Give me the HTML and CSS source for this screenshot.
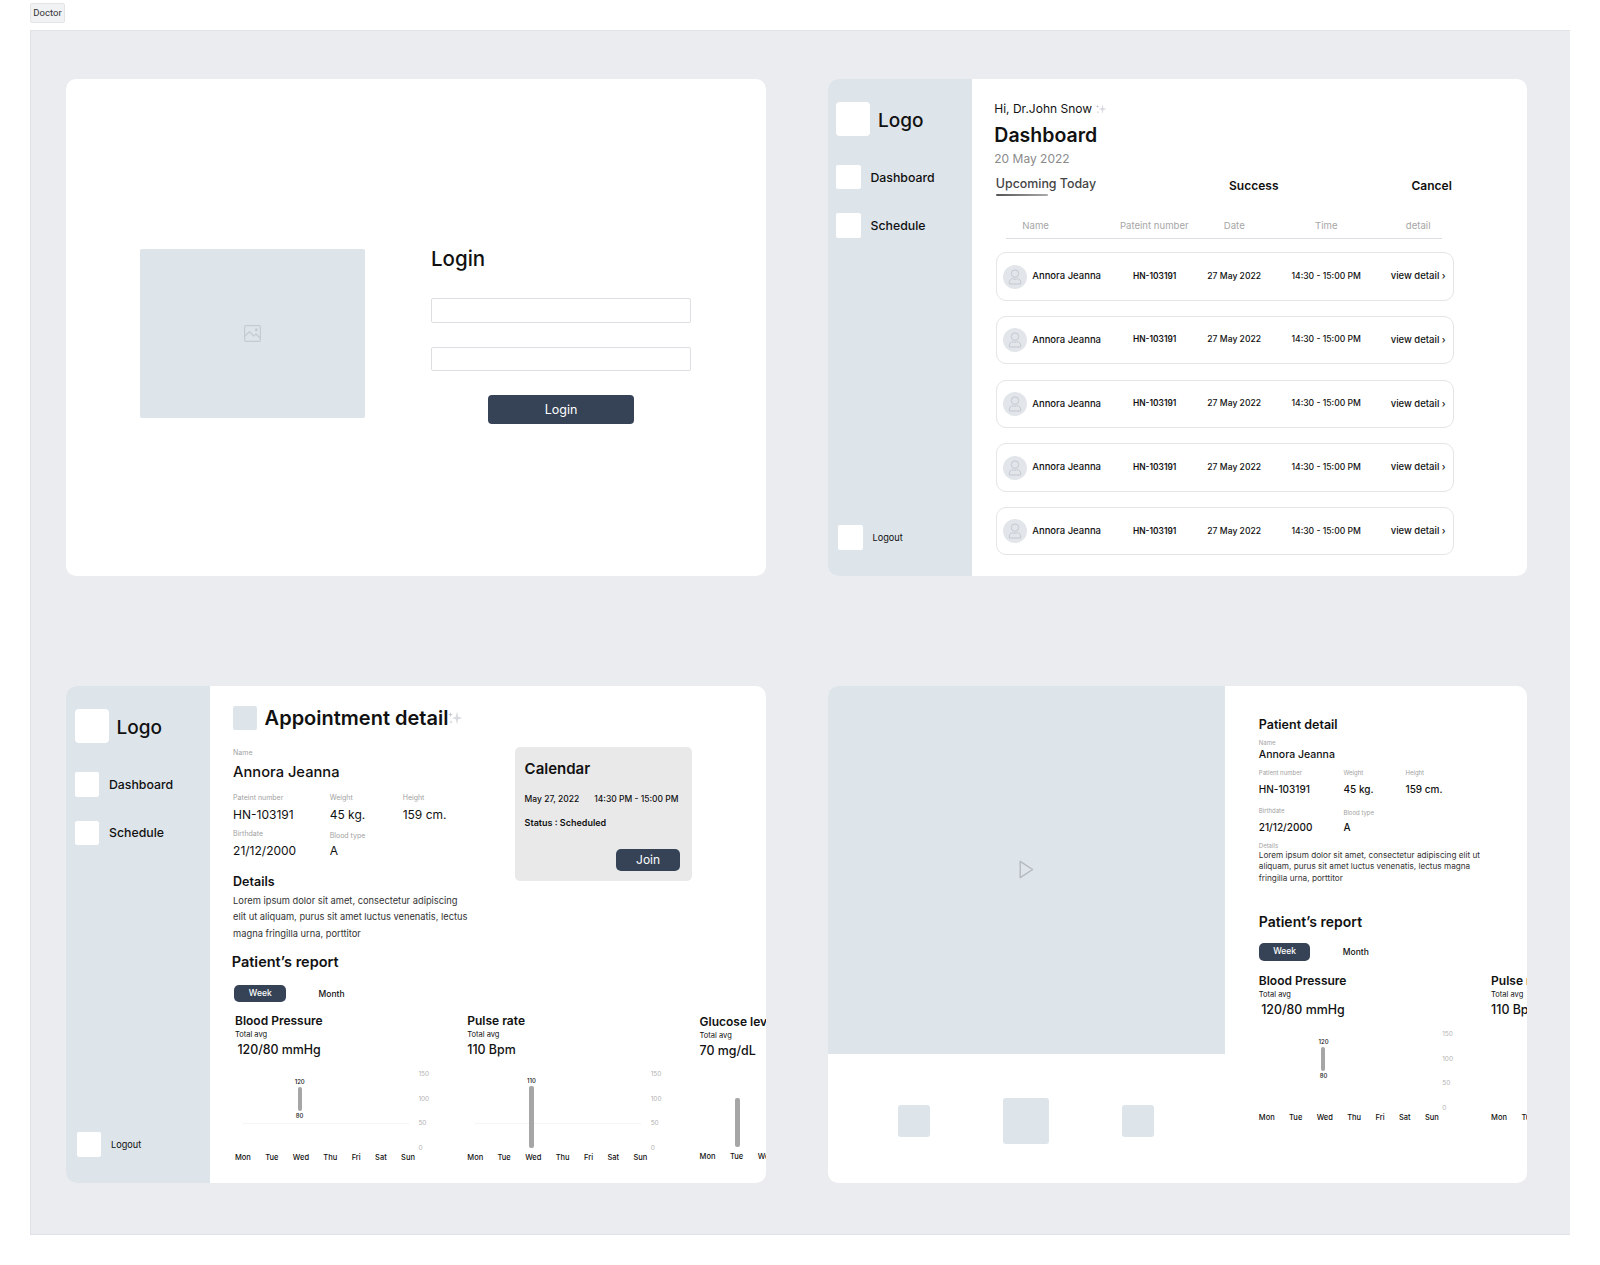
FILE: index.html
```html
<!DOCTYPE html>
<html lang="en">
<head>
    <meta charset="UTF-8">
    <meta name="viewport" content="width=device-width, initial-scale=1.0">
    <title>Doctor</title>
    <link rel="stylesheet" href="styles.css">
</head>
<body>
    <svg class="icon-defs" aria-hidden="true">
        <symbol id="sparkle" viewBox="0 0 16 16">
            <path d="M10 1.5 L11.2 6.8 L15.5 8 L11.2 9.2 L10 14.5 L8.8 9.2 L5 8 L8.8 6.8 Z" fill="#d8dbe0"/>
            <path d="M3.5 2 L4.1 4 L6 4.6 L4.1 5.2 L3.5 7 L2.9 5.2 L1 4.6 L2.9 4 Z" fill="#c5cad0"/>
            <path d="M4 10 L4.5 11.5 L6 12 L4.5 12.5 L4 14 L3.5 12.5 L2 12 L3.5 11.5 Z" fill="#d2d6db"/>
        </symbol>
        <symbol id="user" viewBox="0 0 24 24">
            <circle cx="12" cy="8.6" r="3.7" fill="none" stroke="#c4c9d0" stroke-width="1"/>
            <path d="M6.4 19 C5.6 15.4 8 13.8 9.6 13.6 C11 14.4 13 14.4 14.4 13.6 C16 13.8 18.4 15.4 17.6 19 Z" fill="none" stroke="#c4c9d0" stroke-width="1" stroke-linejoin="round"/>
        </symbol>
    </svg>

    <header class="topbar">
        <span class="frame-tab">Doctor</span>
    </header>

    <main class="canvas">
        <!-- Login -->
        <section class="card card-login">
            <div class="login-image">
                <svg class="image-icon" viewBox="0 0 17 17" aria-hidden="true">
                    <rect x="0.6" y="0.6" width="15.8" height="15.8" rx="1.5" fill="none" stroke="#c6cbd2" stroke-width="1.2"/>
                    <path d="M1 11 L5.5 6.5 L9.5 11 L12 9 L16 13" fill="none" stroke="#c6cbd2" stroke-width="1.2"/>
                    <circle cx="12.3" cy="4.8" r="1.5" fill="#c6cbd2"/>
                </svg>
            </div>
            <form class="login-form">
                <h1 class="login-title">Login</h1>
                <input class="login-input" type="text" aria-label="Username">
                <input class="login-input" type="password" aria-label="Password">
                <button class="btn btn-login" type="button">Login</button>
            </form>
        </section>

        <!-- Dashboard -->
        <section class="card card-app">
            <aside class="sidebar">
                <div class="logo"><span class="logo-box"></span><span class="logo-text">Logo</span></div>
                <nav class="nav">
                    <a class="nav-item"><span class="nav-box"></span>Dashboard</a>
                    <a class="nav-item"><span class="nav-box"></span>Schedule</a>
                </nav>
                <a class="logout"><span class="nav-box"></span>Logout</a>
            </aside>
            <div class="dash-main">
                <p class="greeting">Hi, Dr.John Snow <svg class="sparkle-sm"><use href="#sparkle"/></svg></p>
                <h2 class="dash-title">Dashboard</h2>
                <p class="dash-date">20 May 2022</p>
                <div class="tabs">
                    <div class="tab tab-active">Upcoming Today<div class="tab-line"></div></div>
                    <div class="tab">Success</div>
                    <div class="tab">Cancel</div>
                </div>
                <div class="table-head">
                    <span class="head-name">Name</span>
                    <span>Pateint number</span>
                    <span>Date</span>
                    <span>Time</span>
                    <span class="head-detail">detail</span>
                </div>
                <div class="appt-list">
                    <div class="appt-row">
                        <div class="appt-name"><svg class="avatar"><use href="#user"/></svg>Annora Jeanna</div>
                        <span class="appt-hn">HN-103191</span>
                        <span>27 May 2022</span>
                        <span>14:30 - 15:00 PM</span>
                        <span class="appt-view">view detail ›</span>
                    </div>
                    <div class="appt-row">
                        <div class="appt-name"><svg class="avatar"><use href="#user"/></svg>Annora Jeanna</div>
                        <span class="appt-hn">HN-103191</span>
                        <span>27 May 2022</span>
                        <span>14:30 - 15:00 PM</span>
                        <span class="appt-view">view detail ›</span>
                    </div>
                    <div class="appt-row">
                        <div class="appt-name"><svg class="avatar"><use href="#user"/></svg>Annora Jeanna</div>
                        <span class="appt-hn">HN-103191</span>
                        <span>27 May 2022</span>
                        <span>14:30 - 15:00 PM</span>
                        <span class="appt-view">view detail ›</span>
                    </div>
                    <div class="appt-row">
                        <div class="appt-name"><svg class="avatar"><use href="#user"/></svg>Annora Jeanna</div>
                        <span class="appt-hn">HN-103191</span>
                        <span>27 May 2022</span>
                        <span>14:30 - 15:00 PM</span>
                        <span class="appt-view">view detail ›</span>
                    </div>
                    <div class="appt-row">
                        <div class="appt-name"><svg class="avatar"><use href="#user"/></svg>Annora Jeanna</div>
                        <span class="appt-hn">HN-103191</span>
                        <span>27 May 2022</span>
                        <span>14:30 - 15:00 PM</span>
                        <span class="appt-view">view detail ›</span>
                    </div>
                </div>
            </div>
        </section>

        <!-- Appointment detail -->
        <section class="card card-app">
            <aside class="sidebar">
                <div class="logo"><span class="logo-box"></span><span class="logo-text">Logo</span></div>
                <nav class="nav">
                    <a class="nav-item"><span class="nav-box"></span>Dashboard</a>
                    <a class="nav-item"><span class="nav-box"></span>Schedule</a>
                </nav>
                <a class="logout"><span class="nav-box"></span>Logout</a>
            </aside>
            <div class="detail-main">
                <div class="detail-header">
                    <span class="detail-box"></span>
                    <h2 class="detail-title">Appointment detail</h2>
                    <svg class="sparkle-lg"><use href="#sparkle"/></svg>
                </div>
                <div class="detail-top">
                    <div class="patient">
                        <div class="lbl patient-name-lbl">Name</div>
                        <div class="patient-name">Annora Jeanna</div>
                        <div class="info-row info-first">
                            <div class="info-a"><div class="lbl">Pateint number</div><div class="val">HN-103191</div></div>
                            <div class="info-b"><div class="lbl">Weight</div><div class="val">45 kg.</div></div>
                            <div><div class="lbl">Height</div><div class="val">159 cm.</div></div>
                        </div>
                        <div class="info-row info-second">
                            <div class="info-a"><div class="lbl">Birthdate</div><div class="val">21/12/2000</div></div>
                            <div class="info-b"><div class="lbl lbl-low">Blood type</div><div class="val val-low">A</div></div>
                        </div>
                        <h3 class="details-title">Details</h3>
                        <p class="details-text">Lorem ipsum dolor sit amet, consectetur adipiscing<br>elit ut aliquam, purus sit amet luctus venenatis, lectus<br>magna fringilla urna, porttitor</p>
                    </div>
                    <div class="calendar">
                        <h3 class="calendar-title">Calendar</h3>
                        <div class="calendar-when"><span>May 27, 2022</span><span>14:30 PM - 15:00 PM</span></div>
                        <div class="calendar-status">Status : Scheduled</div>
                        <button class="btn btn-join" type="button">Join</button>
                    </div>
                </div>
                <h2 class="report-title">Patient’s report</h2>
                <div class="range">
                    <span class="range-on">Week</span>
                    <span class="range-off">Month</span>
                </div>
                <div class="reports">
                    <div class="report">
                        <div class="report-name">Blood Pressure</div>
                        <div class="report-avg">Total avg</div>
                        <div class="report-value report-value-in">120/80 mmHg</div>
                        <div class="chart">
                            <div class="plot">
                                <span class="bar-label bar-bp-top">120</span>
                                <span class="bar bar-bp"></span>
                                <span class="bar-label bar-bp-low">80</span>
                            </div>
                            <div class="axis"><span>150</span><span>100</span><span>50</span><span>0</span></div>
                        </div>
                        <div class="days"><span>Mon</span><span>Tue</span><span>Wed</span><span>Thu</span><span>Fri</span><span>Sat</span><span>Sun</span></div>
                    </div>
                    <div class="report">
                        <div class="report-name">Pulse rate</div>
                        <div class="report-avg">Total avg</div>
                        <div class="report-value">110 Bpm</div>
                        <div class="chart">
                            <div class="plot">
                                <span class="bar-label bar-pulse-top">110</span>
                                <span class="bar bar-pulse"></span>
                            </div>
                            <div class="axis"><span>150</span><span>100</span><span>50</span><span>0</span></div>
                        </div>
                        <div class="days"><span>Mon</span><span>Tue</span><span>Wed</span><span>Thu</span><span>Fri</span><span>Sat</span><span>Sun</span></div>
                    </div>
                    <div class="report report-low">
                        <div class="report-name">Glucose level</div>
                        <div class="report-avg">Total avg</div>
                        <div class="report-value">70 mg/dL</div>
                        <div class="chart">
                            <div class="plot plot-short">
                                <span class="bar bar-glucose"></span>
                            </div>
                        </div>
                        <div class="days days-cut"><span>Mon</span><span>Tue</span><span>Wed</span></div>
                    </div>
                </div>
            </div>
        </section>

        <!-- Video call -->
        <section class="card card-call">
            <div class="call-left">
                <div class="video">
                    <svg class="play-icon" viewBox="0 0 15 19" aria-hidden="true">
                        <path d="M1.2 1.4 L13.6 9.5 L1.2 17.6 Z" fill="none" stroke="#b5b9bf" stroke-width="1.4" stroke-linejoin="round"/>
                    </svg>
                </div>
                <div class="call-controls">
                    <span class="control"></span>
                    <span class="control control-main"></span>
                    <span class="control"></span>
                </div>
            </div>
            <div class="call-panel">
                <h2 class="panel-title">Patient detail</h2>
                <div class="lbl-sm panel-name-lbl">Name</div>
                <div class="panel-name">Annora Jeanna</div>
                <div class="panel-row panel-first">
                    <div class="panel-a"><div class="lbl-sm">Patient number</div><div class="val-sm">HN-103191</div></div>
                    <div class="panel-b"><div class="lbl-sm">Weight</div><div class="val-sm">45 kg.</div></div>
                    <div><div class="lbl-sm">Height</div><div class="val-sm">159 cm.</div></div>
                </div>
                <div class="panel-row panel-second">
                    <div class="panel-a"><div class="lbl-sm">Birthdate</div><div class="val-sm">21/12/2000</div></div>
                    <div class="panel-b"><div class="lbl-sm lbl-low">Blood type</div><div class="val-sm val-low-sm">A</div></div>
                </div>
                <div class="lbl-sm panel-details-lbl">Details</div>
                <p class="panel-text">Lorem ipsum dolor sit amet, consectetur adipiscing elit ut<br>aliquam, purus sit amet luctus venenatis, lectus magna<br>fringilla urna, porttitor</p>
                <h2 class="report-title panel-report-title">Patient’s report</h2>
                <div class="range panel-range">
                    <span class="range-on">Week</span>
                    <span class="range-off">Month</span>
                </div>
                <div class="reports panel-reports">
                    <div class="report">
                        <div class="report-name">Blood Pressure</div>
                        <div class="report-avg">Total avg</div>
                        <div class="report-value report-value-in">120/80 mmHg</div>
                        <div class="chart">
                            <div class="plot plot-clean">
                                <span class="bar-label bar-bp-top">120</span>
                                <span class="bar bar-bp"></span>
                                <span class="bar-label bar-bp-low">80</span>
                            </div>
                            <div class="axis"><span>150</span><span>100</span><span>50</span><span>0</span></div>
                        </div>
                        <div class="days"><span>Mon</span><span>Tue</span><span>Wed</span><span>Thu</span><span>Fri</span><span>Sat</span><span>Sun</span></div>
                    </div>
                    <div class="report">
                        <div class="report-name">Pulse rate</div>
                        <div class="report-avg">Total avg</div>
                        <div class="report-value">110 Bpm</div>
                        <div class="chart">
                            <div class="plot plot-clean"></div>
                        </div>
                        <div class="days days-cut"><span>Mon</span><span>Tue</span></div>
                    </div>
                </div>
            </div>
        </section>
    </main>
</body>
</html>
```

FILE: styles.css
```css
* {
    box-sizing: border-box;
}

html, body {
    height: 1265px;
    overflow: hidden;
}

body {
    margin: 0;
    background: #fff;
    color: #111;
    font-family: Inter, "Open Sans", sans-serif;
}

h1, h2, h3, p {
    margin: 0;
}

.icon-defs {
    display: none;
}

/* top strip */
.topbar {
    height: 30px;
    padding: 3px 0 0 30px;
}

.frame-tab {
    display: block;
    width: 35px;
    height: 20px;
    background: #f1f2f3;
    border: 1px solid #e3e4e6;
    border-radius: 2px;
    font-family: Roboto, sans-serif;
    font-size: 9.5px;
    line-height: 18px;
    text-align: center;
    color: #333;
}

.canvas {
    display: grid;
    grid-template-columns: 699.5px 699.5px;
    grid-template-rows: 497.6px 497.6px;
    column-gap: 62px;
    row-gap: 109.5px;
    width: 1540px;
    height: 1205px;
    margin-left: 30px;
    padding: 47.6px 0 0 35.3px;
    background: #eaecef;
    border: solid #dfe2e6;
    border-width: 1px 0 1px 1px;
}

.card {
    display: flex;
    overflow: hidden;
    background: #fff;
    border-radius: 10px;
}

/* login */
.card-login {
    align-items: flex-start;
    padding: 164.4px 0 0 73.5px;
}

.login-image {
    display: flex;
    align-items: center;
    justify-content: center;
    width: 225px;
    height: 169px;
    margin-top: 6px;
    background: #dde4ea;
    border-radius: 2px;
}

.image-icon {
    width: 17px;
    height: 17px;
}

.login-form {
    display: flex;
    flex-direction: column;
    width: 260px;
    margin-left: 66.2px;
}

.login-title {
    padding-top: 1px;
    font-size: 20.5px;
    font-weight: 500;
    line-height: 30px;
}

.login-input {
    height: 24.6px;
    margin-top: 24px;
    background: #fff;
    border: 1.5px solid #dcdee1;
    border-radius: 2px;
}

.btn {
    background: #364356;
    border: none;
    color: #fff;
    font-family: inherit;
    cursor: pointer;
}

.btn-login {
    align-self: center;
    width: 146px;
    height: 29px;
    margin-top: 24px;
    border-radius: 4px;
    font-size: 12.5px;
}

/* sidebar */
.sidebar {
    display: flex;
    flex-direction: column;
    flex: 0 0 144px;
    padding: 23.4px 0 26.5px 8.7px;
    background: #dde4ea;
}

.logo {
    display: flex;
    align-items: center;
    gap: 7.5px;
}

.logo-box {
    width: 34px;
    height: 34px;
    background: #fff;
    border-radius: 4px;
}

.logo-text {
    padding-top: 3px;
    font-size: 19px;
    font-weight: 500;
}

.nav {
    display: flex;
    flex-direction: column;
    gap: 24px;
    margin-top: 29px;
}

.nav-item {
    display: flex;
    align-items: center;
    gap: 9.5px;
    font-size: 12.3px;
    font-weight: 500;
}

.nav-box {
    width: 24.5px;
    height: 24.5px;
    background: #fff;
    border-radius: 2px;
}

.logout {
    display: flex;
    align-items: center;
    gap: 9.5px;
    margin-top: auto;
    margin-left: 2px;
    font-size: 9.2px;
}

/* dashboard */
.dash-main {
    flex: 1;
    padding: 22.4px 0 0 22.5px;
}

.greeting {
    display: flex;
    align-items: center;
    gap: 3px;
    font-size: 12px;
    line-height: 16px;
}

.sparkle-sm {
    width: 12px;
    height: 12px;
}

.dash-title {
    margin-top: 5px;
    font-size: 19.5px;
    font-weight: 600;
    line-height: 26px;
}

.dash-date {
    margin-top: 2.6px;
    color: #8b8b8b;
    font-size: 12px;
    line-height: 16px;
}

.tabs {
    display: flex;
    justify-content: space-between;
    width: 456px;
    margin: 9.4px 0 0 1.5px;
}

.tab {
    margin-top: 2px;
    font-size: 12px;
    font-weight: 600;
    line-height: 16px;
}

.tab-active {
    margin-top: 0;
    color: #444;
    font-size: 12.4px;
    font-weight: 500;
}

.tab-line {
    width: 52px;
    height: 2px;
    margin-top: 2px;
    background: linear-gradient(90deg, #555, #aaa);
    border-radius: 1px;
}

.table-head {
    display: grid;
    grid-template-columns: 108px 80px 80px 104px 64px;
    width: 436px;
    margin: 23px 0 0 12px;
    padding-bottom: 5px;
    border-bottom: 1px solid #dcdde0;
    color: #a6a6a6;
    font-size: 9.6px;
    line-height: 14px;
    text-align: center;
    white-space: nowrap;
}

.head-name {
    padding-left: 16px;
    text-align: left;
}

.head-detail {
    padding-left: 27.5px;
    text-align: left;
}

.appt-list {
    display: flex;
    flex-direction: column;
    gap: 15.4px;
    margin: 13.4px 0 0 1.9px;
}

.appt-row {
    display: grid;
    grid-template-columns: 118px 79px 80px 104px 77px;
    align-items: center;
    width: 458px;
    height: 48.3px;
    padding-bottom: 1.5px;
    border: 1.5px solid #e4e5e7;
    border-radius: 10px;
    font-size: 8.6px;
    font-weight: 500;
    text-align: center;
    white-space: nowrap;
}

.appt-name {
    display: flex;
    align-items: center;
    gap: 5px;
    padding-left: 6px;
    font-size: 9.5px;
}

.avatar {
    flex: none;
    width: 24px;
    height: 24px;
    margin-top: 1.5px;
    background: #e2e5ea;
    border-radius: 50%;
}

.appt-hn {
    font-size: 8.4px;
    font-weight: 600;
}

.appt-view {
    padding-left: 12.5px;
    font-size: 9.5px;
    text-align: left;
}

/* appointment detail */
.detail-main {
    flex: 1;
    min-width: 0;
    padding: 20.3px 0 0 22.8px;
}

.detail-header {
    display: flex;
    align-items: center;
    height: 24px;
}

.detail-box {
    width: 24px;
    height: 24px;
    margin-right: 7.5px;
    background: #dde4ea;
    border-radius: 2px;
}

.detail-title {
    font-size: 20px;
    font-weight: 600;
}

.sparkle-lg {
    width: 16px;
    height: 16px;
    margin-left: -1px;
}

.detail-top {
    display: flex;
    margin-top: 16.7px;
}

.patient {
    flex: 0 0 282px;
    padding-top: 1.3px;
}

.lbl {
    color: #a2a2a2;
    font-size: 7px;
    line-height: 10px;
}

.patient-name {
    margin-top: 5px;
    font-size: 14.7px;
    font-weight: 500;
    line-height: 18px;
}

.val {
    margin-top: 3.7px;
    font-size: 12px;
    line-height: 16px;
}

.info-row {
    display: flex;
}

.info-first {
    margin-top: 12px;
}

.info-second {
    margin-top: 6.3px;
}

.info-a {
    flex: 0 0 96.6px;
}

.info-b {
    flex: 0 0 73px;
}

.lbl-low {
    padding-top: 2.5px;
}

.val-low {
    margin-top: 1.2px;
}

.details-title {
    margin-top: 15.7px;
    font-size: 12.5px;
    font-weight: 600;
    line-height: 16px;
}

.details-text {
    margin-top: 2.8px;
    color: #333;
    font-size: 9.3px;
    line-height: 16.3px;
    white-space: nowrap;
}

.calendar {
    flex: 0 0 177px;
    height: 134.3px;
    padding: 13px 0 0 9.5px;
    background: #e9e9ea;
    border-radius: 5px;
}

.calendar-title {
    font-size: 15px;
    font-weight: 600;
    line-height: 18px;
}

.calendar-when {
    display: flex;
    gap: 15px;
    margin-top: 15px;
    font-size: 8.5px;
    font-weight: 500;
    line-height: 12px;
    white-space: nowrap;
}

.calendar-status {
    margin-top: 12px;
    font-size: 9px;
    font-weight: 600;
    line-height: 12px;
}

.btn-join {
    display: block;
    width: 64px;
    height: 22.4px;
    margin: 20px 0 0 91.5px;
    border-radius: 5px;
    font-size: 12px;
}

.report-title {
    margin: 10.2px 0 0 -1.4px;
    font-size: 14.5px;
    font-weight: 600;
    line-height: 20px;
}

.range {
    display: flex;
    align-items: center;
    margin: 12.7px 0 0 1.4px;
    font-size: 8.5px;
    font-weight: 500;
}

.range-on {
    width: 51.5px;
    height: 17.3px;
    background: #364356;
    border-radius: 5px;
    color: #fff;
    line-height: 17.3px;
    text-align: center;
}

.range-off {
    margin-left: 32.5px;
}

.reports {
    display: flex;
    margin: 11px 0 0 1.9px;
}

.report {
    flex: 0 0 232.3px;
}

.report-low {
    margin-top: 1px;
}

.report-name {
    font-size: 12px;
    font-weight: 600;
    line-height: 16px;
    white-space: nowrap;
}

.report-avg {
    margin-top: 1.3px;
    font-size: 7.5px;
    line-height: 10px;
}

.report-value {
    margin-top: 0.4px;
    font-size: 12.4px;
    font-weight: 500;
    line-height: 18px;
    white-space: nowrap;
}

.report-value-in {
    padding-left: 2.4px;
}

.chart {
    display: flex;
    margin-top: 10.3px;
}

.plot {
    position: relative;
    flex: 0 0 183.4px;
    height: 83.7px;
}

.plot::before {
    content: "";
    position: absolute;
    top: 54px;
    left: 8px;
    width: 166px;
    height: 1px;
    background: #f5f5f5;
}

.plot-short {
    height: 81.7px;
}

.plot-short::before,
.plot-clean::before {
    display: none;
}

.axis {
    display: flex;
    flex-direction: column;
    justify-content: space-between;
    height: 83.7px;
    color: #b3b3b3;
    font-size: 6.5px;
    line-height: 10px;
}

.bar {
    position: absolute;
    width: 4px;
    background: #a6a6a6;
    border-radius: 2px;
}

.bar-bp {
    top: 18px;
    left: 62.7px;
    height: 24px;
}

.bar-pulse {
    top: 17px;
    left: 61.7px;
    width: 5px;
    height: 62px;
}

.bar-glucose {
    top: 28px;
    left: 35px;
    width: 5px;
    height: 49px;
}

.bar-label {
    position: absolute;
    left: 54.7px;
    width: 20px;
    font-size: 6px;
    font-weight: 500;
    line-height: 10px;
    text-align: center;
}

.bar-bp-top {
    top: 7.7px;
}

.bar-bp-low {
    top: 42px;
}

.bar-pulse-top {
    top: 7px;
    left: 54.2px;
}

.days {
    display: flex;
    justify-content: space-between;
    width: 180px;
    margin-top: 0.6px;
    font-size: 7.5px;
    font-weight: 500;
    line-height: 10px;
}

.days-cut {
    justify-content: flex-start;
    gap: 14.5px;
    white-space: nowrap;
}

/* video call */
.call-left {
    display: flex;
    flex-direction: column;
    flex: 0 0 397px;
}

.video {
    display: flex;
    align-items: center;
    justify-content: center;
    height: 368.6px;
    background: #dde4ea;
}

.play-icon {
    width: 15px;
    height: 19px;
}

.call-controls {
    display: flex;
    align-items: flex-start;
    justify-content: center;
    gap: 73px;
    margin-top: 44px;
}

.control {
    width: 32px;
    height: 32px;
    margin-top: 6.7px;
    background: #dde4ea;
    border-radius: 3px;
}

.control-main {
    width: 46px;
    height: 46px;
    margin-top: 0;
}

.call-panel {
    flex: 1;
    min-width: 0;
    padding: 30.3px 0 0 34px;
}

.panel-title {
    font-size: 12.5px;
    font-weight: 600;
    line-height: 18px;
}

.lbl-sm {
    color: #a2a2a2;
    font-size: 6px;
    line-height: 8px;
}

.val-sm {
    margin-top: 5.3px;
    font-size: 10px;
    font-weight: 500;
    line-height: 14px;
}

.panel-name-lbl {
    margin-top: 5px;
}

.panel-name {
    margin-top: 1px;
    font-size: 10.5px;
    font-weight: 500;
    line-height: 14px;
}

.panel-row {
    display: flex;
}

.panel-first {
    margin-top: 7px;
}

.panel-second {
    margin-top: 10.7px;
}

.panel-a {
    flex: 0 0 84.7px;
}

.panel-b {
    flex: 0 0 62px;
}

.val-low-sm {
    margin-top: 2.8px;
}

.panel-details-lbl {
    margin-top: 7.4px;
}

.panel-text {
    color: #333;
    font-size: 8.2px;
    line-height: 11.8px;
    white-space: nowrap;
}

.panel-report-title {
    margin: 27px 0 0;
    font-size: 14px;
}

.panel-range {
    margin: 11.3px 0 0;
}

.panel-reports {
    margin: 12.4px 0 0;
}
```
